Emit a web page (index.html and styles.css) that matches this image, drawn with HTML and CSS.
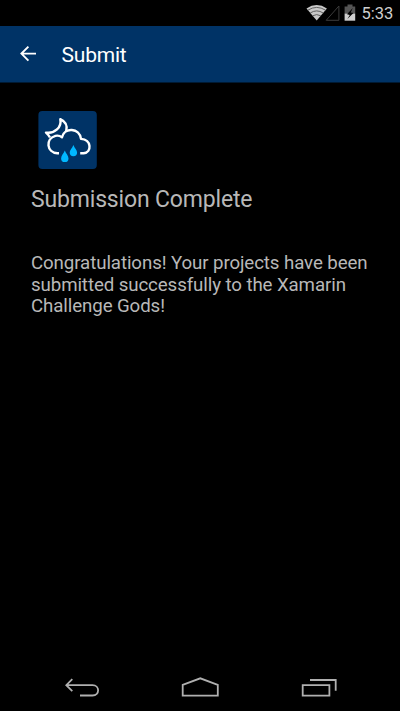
FILE: index.html
```html
<!DOCTYPE html>
<html lang="en">
<head>
<meta charset="utf-8">
<title>Submit</title>
<link rel="stylesheet" href="styles.css">
</head>
<body>
<div class="screen">
  <div class="status">
    <svg class="signals" width="60" height="26" viewBox="300 0 60 26">
      <path d="M306.5 8.4Q316.7 1.6 326.9 8.4L316.7 20.6Z" fill="#c9c9c9"/>
      <path d="M307.8 10.2Q316.7 4.6 325.6 10.2M310.2 13Q316.7 8.8 323.2 13M312.6 15.8Q316.7 13.4 320.8 15.8" fill="none" stroke="#555" stroke-width=".9"/>
      <path d="M338.9 6V20.3H326.2Z" fill="none" stroke="#3c3c3c" stroke-width="1"/>
      <path d="M347.5 4.5h5v2h2.7v7h-10.6v-7h2.9z" fill="#555"/>
      <path d="M344.6 13.5h10.6v7.2h-10.6z" fill="#cfcfcf"/>
      <path d="M352.8 8L347 14.2l2.8.7-2.4 4.1 6-5.9-2.7-.7z" fill="#000"/>
    </svg>
    <span class="clock">5:33</span>
  </div>
  <header class="bar">
    <svg class="back" width="18" height="18" viewBox="19 45 18 18"><path d="M36 53.6H21.5M28.4 46.6L21.4 53.6L28.4 60.6" fill="none" stroke="#fff" stroke-width="1.9"/></svg>
    <h1 class="title">Submit</h1>
  </header>
  <main class="content">
    <svg class="logo" width="60" height="60" viewBox="8 10 60 60">
      <rect x="8.4" y="10.9" width="58.4" height="58.2" rx="4" fill="#003366"/>
      <g fill="none" stroke="#fff" stroke-width="2.4" stroke-linejoin="round">
        <path d="M29 53.3H27.4C16.5 52.5 15.2 38.7 25.4 35.8Q29 35 32 37.3C34.5 26.8 49.5 27.8 51 38.9C61.5 39.5 62.3 52.2 53.5 53.3H50.2"/>
        <path d="M20 37.5Q18.3 34.4 16 32.6C24.5 34 32 27.3 30.3 19.2C35.4 21.5 37.7 25.8 36.2 31.3"/>
      </g>
      <path d="M34.8 50.5C36 53.7 38.5 55.5 38.5 58.4a3.7 3.7 0 0 1-7.4 0C31.1 55.5 33.6 53.7 34.8 50.5ZM43.4 45C44.6 48.2 47.1 49.8 47.1 52.5a3.7 3.7 0 0 1-7.4 0C39.7 49.8 42.2 48.2 43.4 45Z" fill="#00b8ff"/>
    </svg>
    <h2 class="heading">Submission Complete</h2>
    <p class="message">Congratulations! Your projects have been<br>submitted successfully to the Xamarin<br>Challenge Gods!</p>
  </main>
  <nav class="nav">
    <svg width="280" height="32" viewBox="60 672 280 32" fill="none" stroke="#b0b0b0" stroke-width="1.8">
      <path d="M80 695.5H92.5C100 695.5 100 685.2 92.5 685.2H66.5M72.3 679.2L66.3 685.2L72.3 691.2"/>
      <path d="M182.7 684.8L200.3 678.3L217.8 684.8V695.6H182.7Z"/>
      <path d="M302.7 685.2H329.4V695.6H302.7ZM310 680H335.7V690.8"/>
    </svg>
  </nav>
</div>
</body>
</html>
```
FILE: styles.css
```css
* { box-sizing: border-box; margin: 0; }
body { background: #000; font-family: Roboto, sans-serif; }
.screen { width: 400px; height: 711px; display: flex; flex-direction: column; overflow: hidden; }
.status { height: 26px; display: flex; align-items: center; justify-content: flex-end; padding-right: 6.5px; flex: none; }
.clock { width: 32px; margin-left: 1.5px; color: #cfcfcf; font-size: 16.5px; line-height: 26px; padding-top: 2px; white-space: nowrap; }
.bar { height: 57px; flex: none; background: #003366; display: flex; align-items: center; padding-left: 19px; border-bottom: 1px solid #001a33; }
.back { flex: none; }
.title { margin-left: 24.5px; padding-top: 2px; color: #fff; font-size: 21px; letter-spacing: -.2px; font-weight: 400; line-height: 28px; }
.content { flex: 1; padding: 27px 0 0 31px; color: #b8b8b8; }
.logo { display: block; margin-left: 7px; }
.heading { margin-top: 15px; font-size: 23px; letter-spacing: -.17px; font-weight: 400; line-height: 30px; white-space: nowrap; }
.message { margin-top: 38px; font-size: 18.7px; letter-spacing: -.1px; line-height: 21.5px; white-space: nowrap; }
.nav { height: 39px; flex: none; display: flex; padding-left: 60px; }
```
